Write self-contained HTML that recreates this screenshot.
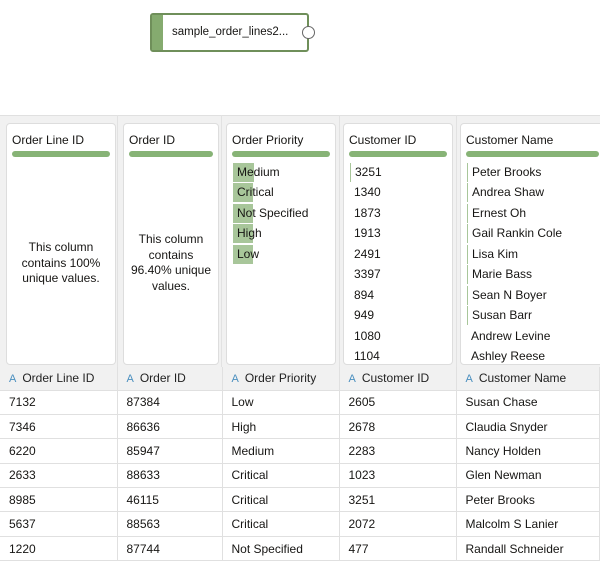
<!DOCTYPE html>
<html><head><style>
*{margin:0;padding:0;box-sizing:border-box}
body{width:600px;height:558px;overflow:hidden;background:#fff;font-family:"Liberation Sans",sans-serif;font-size:12px;color:#161513;position:relative}
.node{position:absolute;left:150px;top:13px;width:159px;height:39px;border:2px solid #6f8f5a;border-radius:3px;background:#fff}
.node .strip{position:absolute;left:0;top:0;bottom:0;width:11px;background:#85ab6f}
.node span{position:absolute;left:20px;top:11px;font-size:11.5px}
.node .port{position:absolute;right:-8px;top:11px;width:13px;height:13px;border:1.5px solid #666;border-radius:50%;background:#fff}
.gray{position:absolute;left:0;top:115px;width:600px;height:275px;background:#f1f1f1;border-top:1px solid #e0e0e0}
.vl{position:absolute;top:115px;height:252px;width:1px;background:#e2e2e2}
.card{position:absolute;top:123px;height:242px;background:#fff;border:1px solid #ddd;border-radius:4px;overflow:hidden}
.card .t{position:absolute;left:5px;top:9px;font-size:12px}
.card .bar{position:absolute;left:5px;right:5px;top:27px;height:6px;border-radius:3px;background:#87b376}
.card .msg{position:absolute;left:0;right:0;text-align:center;font-size:12px;line-height:15.5px}
.li{position:absolute;left:6px;height:19px;line-height:19px;font-size:12px;padding-left:4px}
.li i{position:absolute;left:0;top:0;bottom:0;background:#a8c69a}
.li b{position:relative;font-weight:normal}
.ln{border-left:1px solid #a8c69a}
table{position:absolute;left:0;top:367px;border-collapse:collapse;width:600px}
td,th{border-right:1px solid #e0e0e0;border-bottom:1px solid #e0e0e0;text-align:left;font-weight:normal;padding-left:9px;font-size:12px;padding-top:0;padding-bottom:0}
tr{height:24.4px}
th{background:#f1f1f1;color:#222}
tr.h{height:23px}
th .a{color:#4a8fbf;margin-right:6px;font-size:11px}
</style></head><body>
<div class="node"><div class="strip"></div><span>sample_order_lines2...</span><div class="port"></div></div>
<div class="gray"></div>
<div class="vl" style="left:117px"></div><div class="vl" style="left:221px"></div><div class="vl" style="left:339px"></div><div class="vl" style="left:456px"></div>
<div class="card" style="left:6px;width:110px"><div class="t">Order Line ID</div><div class="bar"></div><div class="msg" style="top:116px">This column<br>contains 100%<br>unique values.</div></div>
<div class="card" style="left:123px;width:96px"><div class="t">Order ID</div><div class="bar"></div><div class="msg" style="top:108px">This column<br>contains<br>96.40% unique<br>values.</div></div>
<div class="card" style="left:226px;width:110px"><div class="t">Order Priority</div><div class="bar"></div>
<div class="li" style="top:39px"><i style="width:21px"></i><b>Medium</b></div>
<div class="li" style="top:59px"><i style="width:20px"></i><b>Critical</b></div>
<div class="li" style="top:80px"><i style="width:20px"></i><b>Not Specified</b></div>
<div class="li" style="top:100px"><i style="width:20px"></i><b>High</b></div>
<div class="li" style="top:121px"><i style="width:20px"></i><b>Low</b></div>
</div>
<div class="card" style="left:343px;width:110px"><div class="t">Customer ID</div><div class="bar"></div>
<div class="li ln" style="top:39px">3251</div><div class="li" style="top:59px">1340</div><div class="li" style="top:80px">1873</div><div class="li" style="top:100px">1913</div><div class="li" style="top:121px">2491</div><div class="li" style="top:141px">3397</div><div class="li" style="top:162px">894</div><div class="li" style="top:182px">949</div><div class="li" style="top:203px">1080</div><div class="li" style="top:223px">1104</div>
</div>
<div class="card" style="left:460px;width:145px"><div class="t">Customer Name</div><div class="bar"></div>
<div class="li ln" style="top:39px">Peter Brooks</div><div class="li ln" style="top:59px">Andrea Shaw</div><div class="li ln" style="top:80px">Ernest Oh</div><div class="li ln" style="top:100px">Gail Rankin Cole</div><div class="li ln" style="top:121px">Lisa Kim</div><div class="li ln" style="top:141px">Marie Bass</div><div class="li ln" style="top:162px">Sean N Boyer</div><div class="li ln" style="top:182px">Susan Barr</div><div class="li" style="top:203px">Andrew Levine</div><div class="li" style="top:223px">Ashley Reese</div>
</div>
<table>
<colgroup><col style="width:117px"><col style="width:105px"><col style="width:117px"><col style="width:117px"><col></colgroup>
<tr class="h"><th><span class="a">A</span>Order Line ID</th><th><span class="a">A</span>Order ID</th><th><span class="a">A</span>Order Priority</th><th><span class="a">A</span>Customer ID</th><th><span class="a">A</span>Customer Name</th></tr>
<tr><td>7132</td><td>87384</td><td>Low</td><td>2605</td><td>Susan Chase</td></tr>
<tr><td>7346</td><td>86636</td><td>High</td><td>2678</td><td>Claudia Snyder</td></tr>
<tr><td>6220</td><td>85947</td><td>Medium</td><td>2283</td><td>Nancy Holden</td></tr>
<tr><td>2633</td><td>88633</td><td>Critical</td><td>1023</td><td>Glen Newman</td></tr>
<tr><td>8985</td><td>46115</td><td>Critical</td><td>3251</td><td>Peter Brooks</td></tr>
<tr><td>5637</td><td>88563</td><td>Critical</td><td>2072</td><td>Malcolm S Lanier</td></tr>
<tr><td>1220</td><td>87744</td><td>Not Specified</td><td>477</td><td>Randall Schneider</td></tr>
</table>
</body></html>
